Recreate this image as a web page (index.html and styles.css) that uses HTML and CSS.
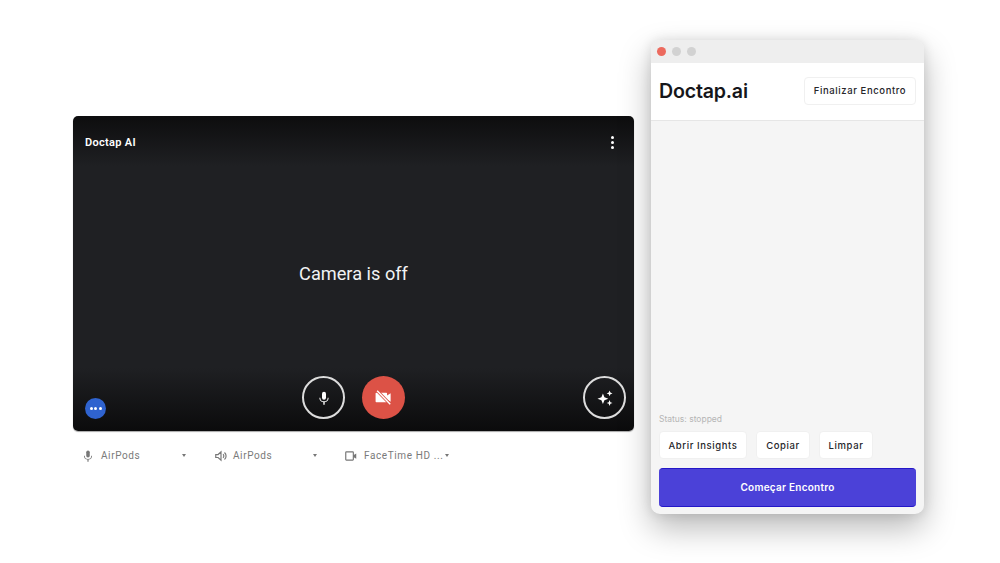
FILE: index.html
```html
<!DOCTYPE html>
<html lang="pt">
<head>
<meta charset="utf-8">
<title>Doctap.ai</title>
<link rel="stylesheet" href="styles.css">
</head>
<body>
<main class="stage">
  <section class="meet">
    <div class="video">
      <div class="video-top">
        <span class="video-name">Doctap AI</span>
        <span class="kebab"><i></i><i></i><i></i></span>
      </div>
      <div class="video-center">Camera is off</div>
      <div class="video-bottom">
        <span class="dots-badge"><i></i><i></i><i></i></span>
        <div class="controls">
          <span class="round outline">
            <svg width="16" height="16" viewBox="0 0 24 24" fill="#fff"><path d="M12 14.5a3 3 0 0 0 3-3v-6a3 3 0 0 0-6 0v6a3 3 0 0 0 3 3z"/><path d="M17.5 11.5a5.5 5.5 0 0 1-11 0H5a7 7 0 0 0 6 6.7V22h2v-3.8a7 7 0 0 0 6-6.7z"/></svg>
          </span>
          <span class="round danger">
            <svg width="19" height="19" viewBox="0 0 24 24" fill="none"><path d="M3 6h12.5a1 1 0 0 1 1 1v2.5L21 6.500v11l-4.500-3V17a1 1 0 0 1-1 1H3a1 1 0 0 1-1-1V7a1 1 0 0 1 1-1z" fill="#fff"/><path d="M4 3.500 20.500 20.500" stroke="#dc5246" stroke-width="4"/><path d="M4 3.500 20.500 20.500" stroke="#fff" stroke-width="1.800"/></svg>
          </span>
        </div>
        <span class="round outline effects">
          <svg width="20" height="20" viewBox="0 0 24 24" fill="#fff"><path d="M9.500 6.500 11.300 11l4.700 1.800-4.700 1.800-1.800 4.700-1.800-4.700L3 12.800 7.700 11z"/><path d="M17.500 3l1 2.500L21 6.500l-2.500 1-1 2.500-1-2.500-2.500-1 2.500-1z"/><path d="M17.500 14.500l1 2.500 2.500 1-2.500 1-1 2.500-1-2.500-2.500-1 2.500-1z"/></svg>
        </span>
      </div>
    </div>
    <div class="devices">
      <div class="device device-mic">
        <svg width="14" height="14" viewBox="0 0 24 24" fill="#777"><path d="M12 14.500a3 3 0 0 0 3-3v-6a3 3 0 0 0-6 0v6a3 3 0 0 0 3 3z"/><path d="M17.500 11.500a5.500 5.500 0 0 1-11 0H5a7 7 0 0 0 6 6.700V22h2v-3.800a7 7 0 0 0 6-6.700z"/></svg>
        <span class="device-label">AirPods</span>
        <span class="caret"></span>
      </div>
      <div class="device device-speaker">
        <svg width="14" height="14" viewBox="0 0 24 24" fill="none" stroke="#777" stroke-width="2"><path d="M3 9.500v5h4l5 4.500V5L7 9.500z"/><path d="M15.500 9a4 4 0 0 1 0 6M18 6a8 8 0 0 1 0 12"/></svg>
        <span class="device-label">AirPods</span>
        <span class="caret"></span>
      </div>
      <div class="device device-cam">
        <svg width="14" height="14" viewBox="0 0 24 24" fill="none" stroke="#777" stroke-width="2"><rect x="3" y="5" width="13" height="14" rx="1"/><path d="M16 10.500 21 7.500v9l-5-3z" fill="#777" stroke="none"/></svg>
        <span class="device-label">FaceTime HD ...</span>
        <span class="caret"></span>
      </div>
    </div>
  </section>

  <section class="panel">
    <div class="titlebar">
      <span class="light red"></span>
      <span class="light"></span>
      <span class="light"></span>
    </div>
    <header class="panel-header">
      <h1 class="brand">Doctap.ai</h1>
      <button class="btn btn-end">Finalizar Encontro</button>
    </header>
    <div class="panel-body">
      <p class="status">Status: stopped</p>
      <div class="actions">
        <button class="btn btn-insights">Abrir Insights</button>
        <button class="btn btn-small">Copiar</button>
        <button class="btn btn-small">Limpar</button>
      </div>
      <button class="primary">Começar Encontro</button>
    </div>
  </section>
</main>
</body>
</html>
```
FILE: styles.css
```css
* { box-sizing: border-box; }
html, body { margin: 0; height: 100%; background: #fff; overflow: hidden; }
body { font-family: "Inter", "Liberation Sans", sans-serif; }

.stage {
  display: flex;
  align-items: flex-start;
  gap: 17px;
  width: 1000px;
  height: 563px;
  padding: 40px 0 0 73px;
}

.meet { width: 561px; margin-top: 76px; }

.video {
  display: flex;
  flex-direction: column;
  height: 315px;
  border-radius: 5px;
  background: linear-gradient(#0d0d0e 0, #1f2023 16%, #1f2023 80%, #0b0b0c 100%);
  box-shadow: 0 1px 1px rgba(0,0,0,.35);
  color: #fff;
}
.video-top {
  display: flex;
  justify-content: space-between;
  align-items: center;
  padding: 18px 20px 0 12px;
  height: 34px;
}
.video-name { font-size: 11px; font-weight: 600; font-family: "Roboto", sans-serif; letter-spacing: .3px; }
.kebab { display: flex; flex-direction: column; gap: 2px; }
.kebab i { width: 3px; height: 3px; background: #fff; border-radius: 50%; }
.video-center {
  flex: 1;
  display: flex;
  align-items: center;
  justify-content: center;
  padding-top: 22px;
  font: 400 18.200px "Roboto", sans-serif;
  color: #f1f3f4;
}
.video-bottom {
  position: relative;
  display: flex;
  align-items: flex-end;
  justify-content: center;
  padding-bottom: 12px;
  height: 56px;
}
.controls { display: flex; gap: 17px; }
.round {
  display: flex;
  align-items: center;
  justify-content: center;
  width: 43px;
  height: 43px;
  border-radius: 50%;
}
.outline { border: 2px solid #dcdcdc; }
.danger { background: #dc5246; }
.effects { position: absolute; right: 8px; bottom: 12px; }
.dots-badge {
  position: absolute;
  left: 12px;
  bottom: 12px;
  display: flex;
  align-items: center;
  justify-content: center;
  gap: 1.500px;
  width: 21px;
  height: 21px;
  border-radius: 50%;
  background: #2f63cf;
}
.dots-badge i { width: 3px; height: 3px; border-radius: 50%; background: #fff; }

.devices {
  display: flex;
  align-items: center;
  height: 49px;
  padding-left: 8px;
  font: 400 10px "Roboto", sans-serif;
  letter-spacing: .6px;
  color: #7a7a7a;
}
.device { display: flex; align-items: center; }
.device-label { margin-left: 6px; }
.device-mic { width: 133px; padding-right: 28px; }
.device-speaker { width: 131px; padding-right: 28px; }
.device-speaker .device-label { margin-left: 5px; }
.device-mic .caret, .device-speaker .caret { margin-left: auto; }
.device-cam { margin-left: -1px; }
.device-cam .caret { margin-left: 2px; }
.caret {
  width: 0;
  height: 0;
  border-left: 2.500px solid transparent;
  border-right: 2.500px solid transparent;
  border-top: 3px solid #777;
}

.panel {
  display: flex;
  flex-direction: column;
  width: 273px;
  height: 474px;
  border-radius: 9px;
  overflow: hidden;
  background: #f5f5f5;
  box-shadow: 0 14px 32px rgba(0,0,0,.28), 0 0 12px rgba(0,0,0,.10);
}
.titlebar {
  display: flex;
  align-items: center;
  gap: 6px;
  height: 23px;
  padding-left: 6px;
  background: #eeeeee;
}
.light { width: 9px; height: 9px; border-radius: 50%; background: #d2d2d2; }
.light.red { background: #ec6a5e; }
.panel-header {
  display: flex;
  align-items: center;
  justify-content: space-between;
  height: 58px;
  padding: 0 8px 2px;
  background: #fff;
  border-bottom: 1px solid #e6e6e6;
}
.brand { margin: 0; font-size: 19.600px; font-weight: 600; letter-spacing: -.2px; color: #16161a; }
.btn {
  height: 28px;
  padding: 0;
  border: 1px solid #f0f0f0;
  border-radius: 4px;
  background: #fff;
  font: 500 9.500px "Inter", sans-serif;
  letter-spacing: .6px;
  color: #26262a;
}
.btn-end { width: 112px; }
.btn-insights { width: 88px; }
.btn-small { width: 54px; }
.panel-body {
  flex: 1;
  display: flex;
  flex-direction: column;
  justify-content: flex-end;
  padding: 0 8px 7px;
}
.status { margin: 0 0 7px; font-size: 8.500px; color: #b5b5b5; }
.actions { display: flex; gap: 9px; margin-bottom: 9px; }
.primary {
  height: 39px;
  padding: 0 0 2px;
  border: 0;
  border-top: 1.500px solid #2417c8;
  border-bottom: 1.500px solid #2417c8;
  border-radius: 4px;
  background: #4b41d8;
  color: #fff;
  font: 600 10px "Inter", sans-serif;
  letter-spacing: .25px;
}
```
